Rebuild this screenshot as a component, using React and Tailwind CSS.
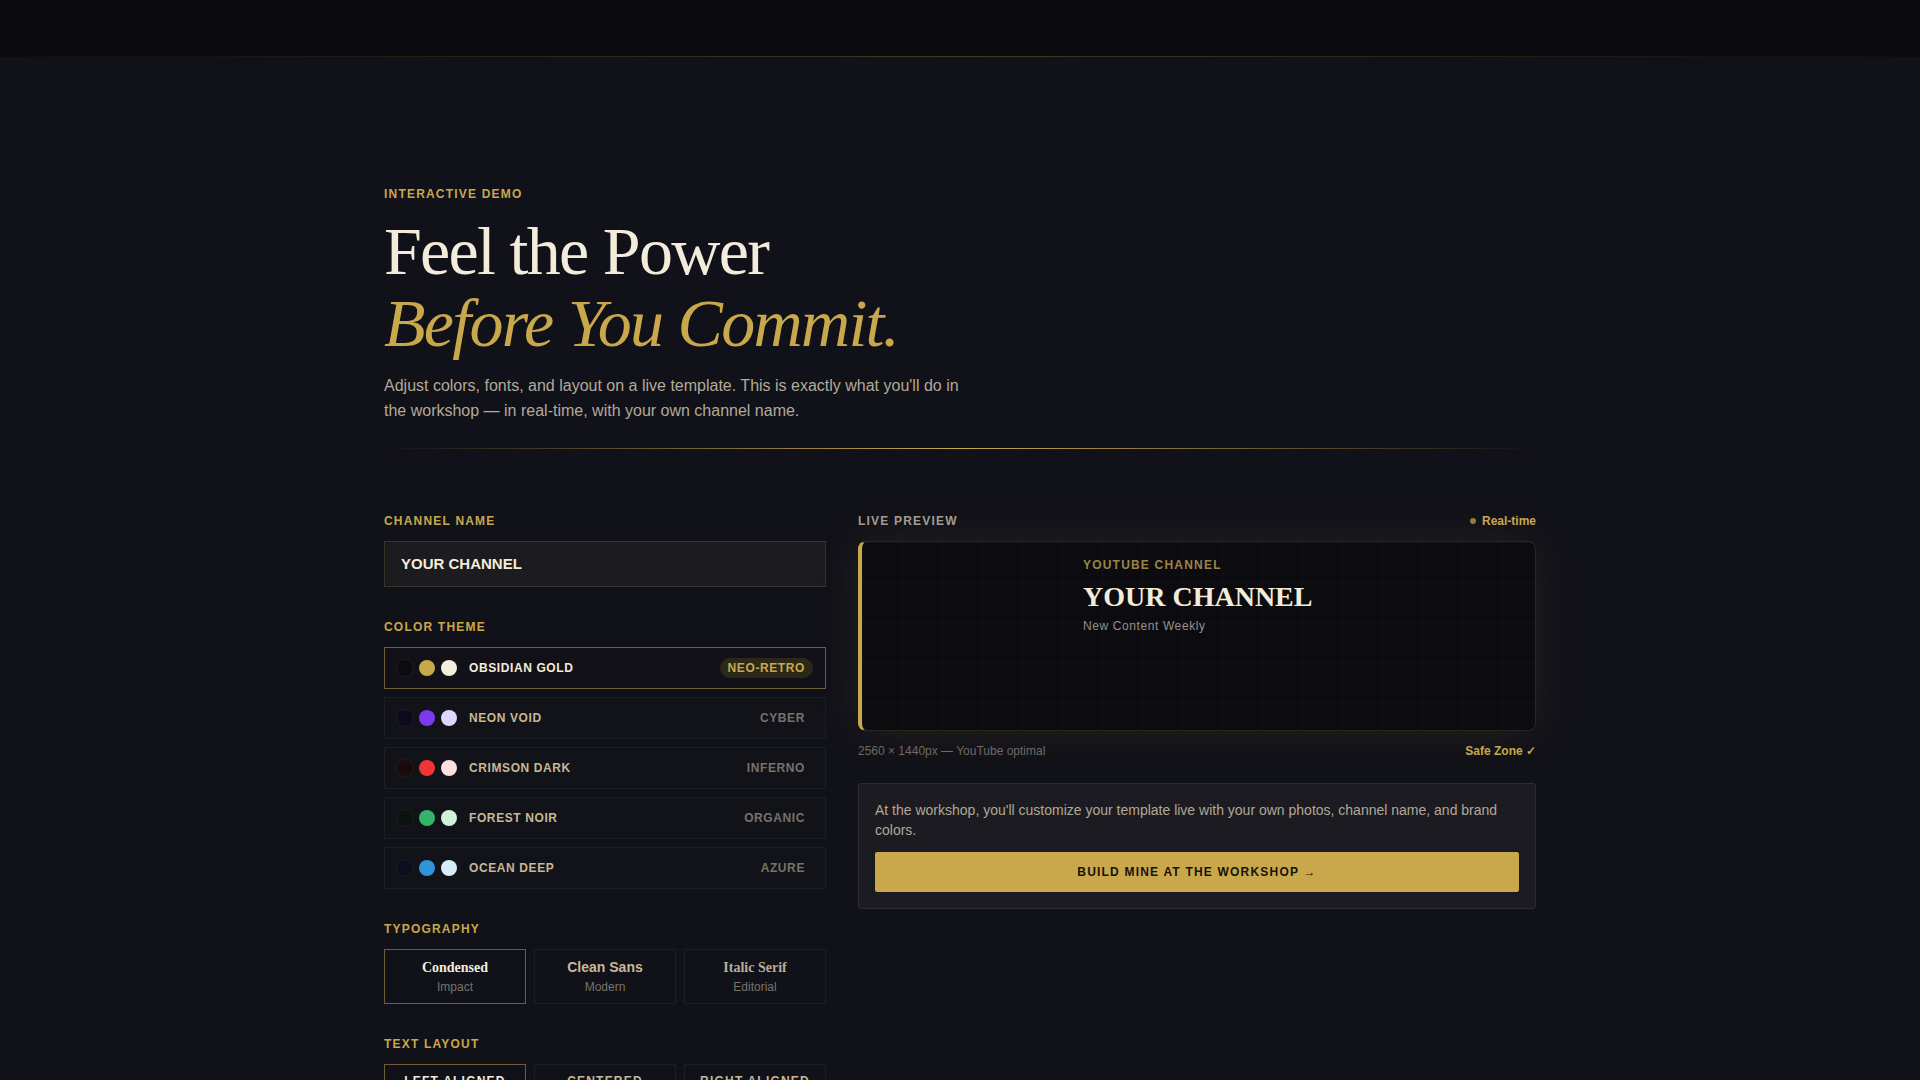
import React, { useState } from "react";

const SANS = "font-['Liberation_Sans',Arial,sans-serif]";
const SERIF = "font-['Liberation_Serif','Times_New_Roman',serif]";

const THEMES = [
  { name: "OBSIDIAN GOLD", tag: "NEO-RETRO", dots: ["#0b0b10", "#c9a84c", "#f4eedd"] },
  { name: "NEON VOID", tag: "CYBER", dots: ["#0e0820", "#7c3aed", "#ddd6fe"] },
  { name: "CRIMSON DARK", tag: "INFERNO", dots: ["#1a0a0a", "#ef3535", "#fde0de"] },
  { name: "FOREST NOIR", tag: "ORGANIC", dots: ["#0b130e", "#34b36a", "#d3f0dd"] },
  { name: "OCEAN DEEP", tag: "AZURE", dots: ["#0a1020", "#2f95d8", "#d8edfb"] },
];

const FONTS = [
  { title: "Condensed", sub: "Impact", cls: SERIF },
  { title: "Clean Sans", sub: "Modern", cls: SANS },
  { title: "Italic Serif", sub: "Editorial", cls: SERIF },
];

const LAYOUTS = ["LEFT ALIGNED", "CENTERED", "RIGHT ALIGNED"];

function Label({ children, className = "" }) {
  return (
    <div className={`text-[12px] leading-4 font-bold tracking-[0.1em] text-[#c9a84c] ${className}`}>
      {children}
    </div>
  );
}

export default function App() {
  const [theme, setTheme] = useState(0);
  const [font, setFont] = useState(0);
  const [layout, setLayout] = useState(0);

  return (
    <div className={`min-h-screen bg-[#111119] ${SANS}`}>
      {/* top bar */}
      <header className="h-[57px] bg-[#0b0b0f] relative">
        <div className="absolute bottom-0 left-0 right-0 h-px bg-linear-to-r from-transparent via-[#c9a84c]/30 to-transparent" />
      </header>

      <main className="max-w-[1152px] mx-auto pt-[129px] pb-24">
        {/* hero */}
        <Label>INTERACTIVE DEMO</Label>
        <h1 className={`${SERIF} mt-[13px] text-[68px] leading-[72px] tracking-[-0.025em] font-normal`}>
          <span className="block text-[#f3ecdb]">Feel the Power</span>
          <span className="block italic text-[#c9a84c]">Before You Commit.</span>
        </h1>
        <p className="mt-[15px] max-w-[584px] text-[16px] leading-[24.5px] text-[#b3aa98]">
          Adjust colors, fonts, and layout on a live template. This is exactly what you'll do in the
          workshop — in real-time, with your own channel name.
        </p>

        <div className="mt-[25px] h-px bg-linear-to-r from-transparent via-[#c9a84c] to-transparent" />

        <div className="mt-16 grid grid-cols-[442px_1fr] gap-8 items-start">
          {/* controls */}
          <div className="flex flex-col gap-8">
            <section>
              <Label>CHANNEL NAME</Label>
              <div className="mt-3 h-[46px] flex items-center px-4 bg-[#1b1b20] border border-[#3a3428] text-[15px] font-bold text-[#f3ecdb]">
                YOUR CHANNEL
              </div>
            </section>

            <section>
              <Label>COLOR THEME</Label>
              <div className="mt-3 flex flex-col gap-2">
                {THEMES.map((t, i) => {
                  const active = i === theme;
                  return (
                    <button
                      key={t.name}
                      onClick={() => setTheme(i)}
                      className={`h-[42px] flex items-center px-3 border text-left ${
                        active ? "border-[#6e5d36] bg-[#111117]" : "border-[#1d1d24] bg-[#121219]"
                      }`}
                    >
                      <span className="flex gap-1.5">
                        {t.dots.map((c, k) => (
                          <span
                            key={k}
                            className={`w-4 h-4 rounded-full ${k === 0 ? "ring-1 ring-[#1e1e24]" : ""}`}
                            style={{ backgroundColor: c }}
                          />
                        ))}
                      </span>
                      <span
                        className={`ml-3 text-[12px] leading-4 font-bold tracking-[0.05em] ${
                          active ? "text-[#f3ecdb]" : "text-[#c8b898]"
                        }`}
                      >
                        {t.name}
                      </span>
                      <span
                        className={`ml-auto px-2 py-[2px] rounded-full text-[12px] leading-4 font-bold tracking-[0.05em] ${
                          active ? "bg-[#2c2819] text-[#c9a84c]" : "text-[#77726a]"
                        }`}
                      >
                        {t.tag}
                      </span>
                    </button>
                  );
                })}
              </div>
            </section>

            <section>
              <Label>TYPOGRAPHY</Label>
              <div className="mt-3 grid grid-cols-3 gap-2">
                {FONTS.map((f, i) => {
                  const active = i === font;
                  return (
                    <button
                      key={f.title}
                      onClick={() => setFont(i)}
                      className={`flex flex-col items-center py-2 border ${
                        active ? "border-[#6e5d36]" : "border-[#1d1d24]"
                      }`}
                    >
                      <span
                        className={`${f.cls} text-[14px] leading-[19px] font-bold ${
                          active ? "text-[#f3ecdb]" : i === 1 ? "text-[#c8b898]" : "text-[#b9ad97]"
                        }`}
                      >
                        {f.title}
                      </span>
                      <span className="mt-0.5 text-[12px] leading-4 text-[#77736c]">{f.sub}</span>
                    </button>
                  );
                })}
              </div>
            </section>

            <section>
              <Label>TEXT LAYOUT</Label>
              <div className="mt-3 grid grid-cols-3 gap-2">
                {LAYOUTS.map((l, i) => {
                  const active = i === layout;
                  return (
                    <button
                      key={l}
                      onClick={() => setLayout(i)}
                      className={`py-2 border text-[12px] leading-4 font-bold tracking-[0.1em] ${
                        active ? "border-[#6e5d36] text-[#f3ecdb]" : "border-[#1d1d24] text-[#c8b898]"
                      }`}
                    >
                      {l}
                    </button>
                  );
                })}
              </div>
            </section>
          </div>

          {/* preview */}
          <div>
            <div className="flex items-center justify-between">
              <div className="text-[12px] leading-4 font-bold tracking-[0.1em] text-[#a39d92]">LIVE PREVIEW</div>
              <div className="flex items-center gap-1.5 text-[12px] leading-4 font-bold text-[#c9a84c]">
                <span className="w-[6px] h-[6px] rounded-full bg-[#c9a84c]/70" />
                Real-time
              </div>
            </div>

            <div className="mt-3 h-[190px] rounded-lg border border-[#2a271f] border-l-4 border-l-[#c9a84c] bg-[#0c0c10] bg-[linear-gradient(rgba(255,255,255,0.022)_1px,transparent_1px),linear-gradient(90deg,rgba(255,255,255,0.022)_1px,transparent_1px)] bg-[size:40px_40px] shadow-[0_0_44px_rgba(201,168,76,0.11)] pt-[15px] pl-[221px]">
              <div className="text-[12px] leading-4 font-bold tracking-[0.1em] text-[#9c8448]">YOUTUBE CHANNEL</div>
              <div className={`${SERIF} mt-2 text-[28px] leading-[31px] font-bold text-[#f3ecdb]`}>YOUR CHANNEL</div>
              <div className="mt-[6px] text-[12px] leading-4 tracking-[0.05em] text-[#96918a]">New Content Weekly</div>
            </div>

            <div className="mt-3 flex items-center justify-between text-[12px] leading-4">
              <span className="text-[#6e6a63]">2560 × 1440px — YouTube optimal</span>
              <span className="font-bold text-[#c9a84c]">Safe Zone ✓</span>
            </div>

            <div className="mt-6 p-4 bg-[#1c1b21] border border-[#2d2c33] rounded-[3px]">
              <p className="text-[14px] leading-5 text-[#b0a898]">
                At the workshop, you'll customize your template live with your own photos, channel name, and brand
                colors.
              </p>
              <button className="mt-3 w-full h-10 bg-[#c9a84c] rounded-[2px] text-[12px] font-bold tracking-[0.1em] text-[#16130d]">
                BUILD MINE AT THE WORKSHOP →
              </button>
            </div>
          </div>
        </div>
      </main>
    </div>
  );
}
